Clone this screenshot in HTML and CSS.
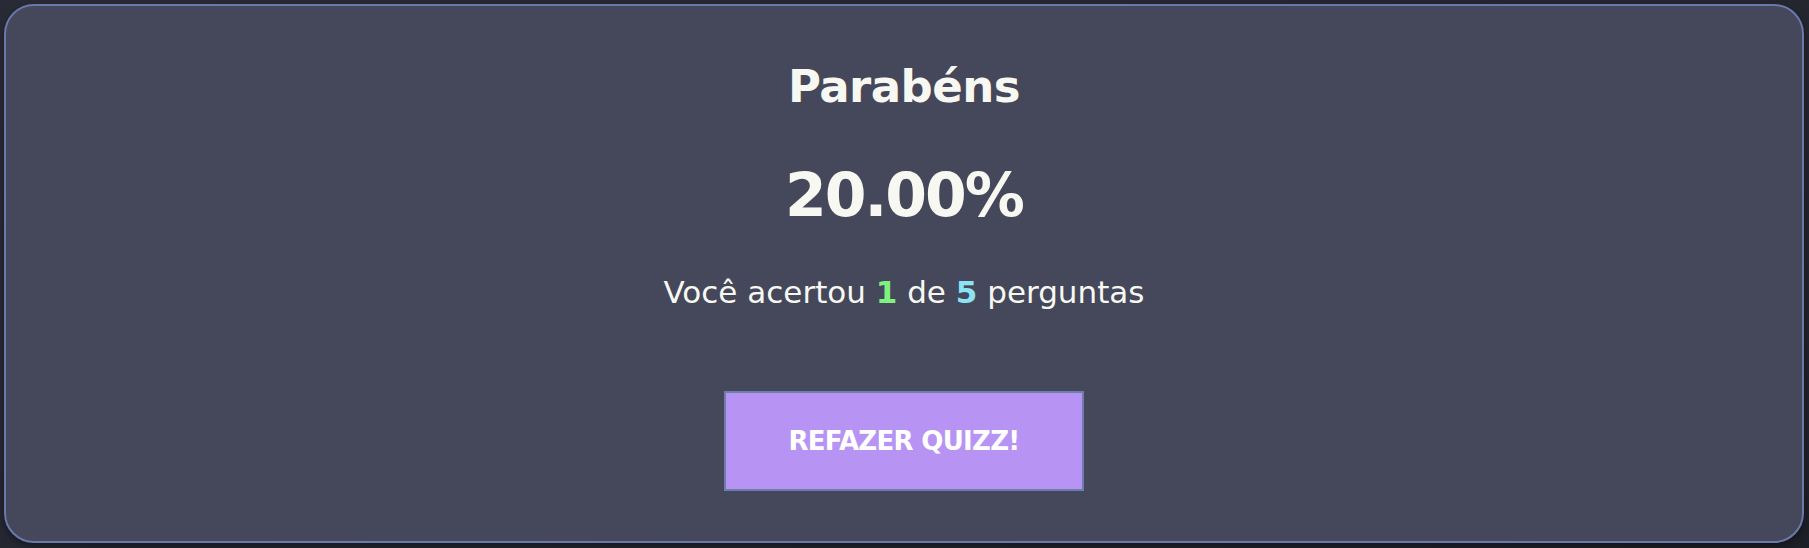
FILE: index.html
```html
<!DOCTYPE html>
<html lang="pt-BR">
<head>
<meta charset="utf-8">
<title>Resultado</title>
<link rel="stylesheet" href="styles.css">
</head>
<body>
  <main class="card">
    <h1 class="title">Parabéns</h1>
    <p class="score">20.00%</p>
    <p class="summary">Você acertou <strong class="hits">1</strong> de <strong class="total">5</strong> perguntas</p>
    <button class="retry" type="button">REFAZER QUIZZ!</button>
  </main>
</body>
</html>
```

FILE: styles.css
```css
html, body {
  margin: 0;
  height: 100%;
}

body {
  padding: 4px 5px 5px 4px;
  box-sizing: border-box;
  background: linear-gradient(160deg, #282a36 0%, #23252f 60%, #1d1f26 100%);
  font-family: "DejaVu Sans", "Noto Sans", sans-serif;
  color: #f8f8f2;
}

.card {
  box-sizing: border-box;
  height: 539px;
  background: #45475a;
  border: 2px solid #6a78ab;
  border-radius: 30px;
  box-shadow: 0 3px 6px rgba(0, 0, 0, 0.35);
  display: flex;
  flex-direction: column;
  align-items: center;
  padding-top: 58px;
  text-align: center;
}

.title {
  margin: 0;
  font-size: 45px;
  line-height: 45px;
  font-weight: 700;
  letter-spacing: -0.5px;
}

.score {
  margin: 56px 0 0;
  font-size: 60px;
  line-height: 60px;
  font-weight: 700;
  letter-spacing: -2px;
}

.summary {
  margin: 52px 0 0;
  font-size: 31px;
  line-height: 31px;
  font-weight: 400;
  letter-spacing: 0;
}

.hits {
  color: #80f07f;
}

.total {
  color: #8be4f6;
}

.retry {
  margin-top: 83px;
  box-sizing: border-box;
  width: 360px;
  height: 100px;
  background: #b794f4;
  border: 2px solid #6f7cb0;
  border-radius: 0;
  color: #ffffff;
  font-family: "DejaVu Sans", "Noto Sans", sans-serif;
  font-size: 26px;
  line-height: 26px;
  font-weight: 700;
  letter-spacing: -0.7px;
  display: flex;
  align-items: center;
  justify-content: center;
  padding: 0;
  cursor: pointer;
}
```
